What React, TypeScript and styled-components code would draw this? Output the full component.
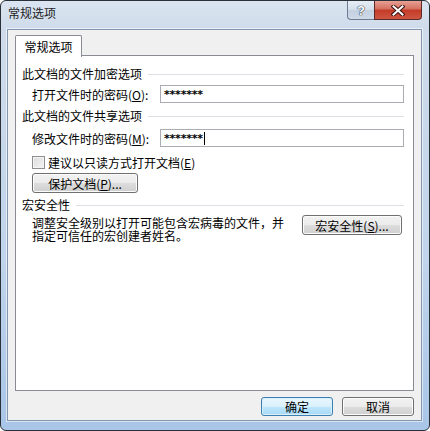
import React from 'react'
import styled, { createGlobalStyle } from 'styled-components'

const GlobalStyle = createGlobalStyle`
  html, body {
    margin: 0;
    padding: 0;
    background: #ffffff;
  }
  body {
    font-family: "Noto Sans CJK SC", "Liberation Sans", sans-serif;
    font-size: 12px;
    color: #000;
  }
`

const Window = styled.div`
  box-sizing: border-box;
  width: 430px;
  height: 431px;
  display: flex;
  flex-direction: column;
  padding: 0 7px 9px 6px;
  border: 1px solid #2a3038;
  border-radius: 6px;
  background: linear-gradient(
    to bottom,
    #dbe5f1 0px,
    #cfdbea 28px,
    #c0d4eb 60%,
    #a9c5e7 100%
  );
  overflow: hidden;
`

const TitleBar = styled.div`
  height: 28px;
  flex: none;
  display: flex;
  align-items: flex-start;
  justify-content: space-between;
`

const Title = styled.div`
  padding: 5px 0 0 1px;
  line-height: 14px;
  font-size: 12px;
  color: #1e1e1e;
`

const CaptionButtons = styled.div`
  display: flex;
  height: 19px;
`

const HelpButton = styled.div`
  box-sizing: border-box;
  width: 27px;
  height: 19px;
  display: flex;
  align-items: center;
  justify-content: center;
  border: 1px solid #6d7d93;
  border-top: none;
  border-right: none;
  border-radius: 0 0 0 4px;
  background: linear-gradient(to bottom, #e6edf5 0%, #d4deea 50%, #c3d0e0 51%, #cfdae8 100%);
  color: #ffffff;
  font-family: "Liberation Sans", sans-serif;
  font-weight: bold;
  font-size: 13px;
  text-shadow: 0 0 1px #2c3a4c, 0 0 1px #2c3a4c, 0 0 1px #2c3a4c;
`

const CloseButton = styled.div`
  box-sizing: border-box;
  width: 48px;
  height: 19px;
  display: flex;
  align-items: center;
  justify-content: center;
  border: 1px solid #5b2a25;
  border-top: none;
  border-radius: 0 0 4px 0;
  background: linear-gradient(to bottom, #e6a194 0%, #d56f5f 45%, #c43b28 50%, #cf5641 100%);
`

const Client = styled.div`
  flex: 1;
  display: flex;
  flex-direction: column;
  padding: 5px 7px 4px 7px;
  background: #f0f0f0;
  border: 1px solid #8496ad;
  box-shadow: 0 0 0 1px rgba(255, 255, 255, 0.55);
`

const TabStrip = styled.div`
  display: flex;
  height: 21px;
  position: relative;
  z-index: 1;
  margin-bottom: -1px;
`

const Tab = styled.div`
  box-sizing: border-box;
  width: 67px;
  height: 22px;
  display: flex;
  align-items: center;
  justify-content: center;
  background: #ffffff;
  border: 1px solid #898c95;
  border-bottom: none;
  border-radius: 2px 2px 0 0;
`

const Panel = styled.div`
  flex: 1;
  display: flex;
  flex-direction: column;
  padding: 10px 9px 0 6px;
  background: #ffffff;
  border: 1px solid #898c95;
`

const SectionTitle = styled.div<{ $gap: number }>`
  display: flex;
  align-items: center;
  line-height: 14px;
  height: 14px;
  margin-top: ${p => p.$gap}px;
  white-space: nowrap;

  &::after {
    content: '';
    flex: 1;
    height: 1px;
    margin-left: 6px;
    background: #dcdfe3;
  }
`

const FieldRow = styled.div<{ $gap: number }>`
  display: flex;
  align-items: center;
  margin-top: ${p => p.$gap}px;
  padding-left: 10px;
`

const FieldLabel = styled.div`
  width: 128px;
  flex: none;
  white-space: nowrap;
`

const PasswordBox = styled.div`
  box-sizing: border-box;
  flex: 1;
  height: 18px;
  display: flex;
  align-items: center;
  padding-left: 3px;
  border: 1px solid #abadb3;
  background: #ffffff;
  font-family: "DejaVu Sans", "Liberation Sans", sans-serif;
  font-weight: bold;
  font-size: 11px;
  letter-spacing: -0.2px;
`

const Caret = styled.span`
  display: inline-block;
  width: 1px;
  height: 13px;
  margin-left: 1px;
  background: #000;
`

const CheckRow = styled.label`
  display: flex;
  align-items: center;
  gap: 3px;
  height: 14px;
  margin-top: 8px;
  padding-left: 10px;
`

const CheckBox = styled.span`
  box-sizing: border-box;
  width: 13px;
  height: 13px;
  border: 1px solid #8e8f8f;
  background: linear-gradient(135deg, #dcdcdc 0%, #f4f4f4 100%);
  box-shadow: inset 0 0 0 1px #f4f4f4;
`

const Button = styled.div<{ $width: number; $focus?: boolean }>`
  box-sizing: border-box;
  width: ${p => p.$width}px;
  height: 20px;
  flex: none;
  display: flex;
  align-items: center;
  justify-content: center;
  border: 1px solid ${p => (p.$focus ? '#3c7fb1' : '#707070')};
  border-radius: 3px;
  background: ${p =>
    p.$focus
      ? 'linear-gradient(to bottom, #eaf6fd 0%, #d9f0fc 50%, #bee6fd 51%, #a7d9f5 100%)'
      : 'linear-gradient(to bottom, #f2f2f2 0%, #ebebeb 50%, #dddddd 51%, #cfcfcf 100%)'};
  box-shadow: inset 0 0 0 1px ${p => (p.$focus ? '#d8eefb' : '#fcfcfc')};
  white-space: nowrap;
`

const ProtectButton = styled(Button)`
  margin: 4px 0 0 10px;
`

const MacroRow = styled.div`
  display: flex;
  align-items: flex-start;
  justify-content: space-between;
  margin-top: 3px;
  padding-left: 10px;
`

const MacroText = styled.div`
  line-height: 13px;
  padding-top: 1px;
`

const MacroButton = styled(Button)`
  margin-right: 2px;
`

const Footer = styled.div`
  display: flex;
  justify-content: flex-end;
  gap: 9px;
  margin-top: 6px;

  ${Button} {
    height: 19px;
  }
`

const Key = styled.span`
  text-decoration: underline;
  text-underline-offset: 1px;
`

const CloseGlyph = () => (
  <svg width="14" height="11" viewBox="0 0 14 11">
    <path d="M2.5 1.5 L11.5 9.5 M11.5 1.5 L2.5 9.5" stroke="#3b1511" strokeWidth="4" strokeLinecap="square" />
    <path d="M2.5 1.5 L11.5 9.5 M11.5 1.5 L2.5 9.5" stroke="#ffffff" strokeWidth="2" strokeLinecap="square" />
  </svg>
)

export default function App() {
  return (
    <>
      <GlobalStyle />
      <Window>
        <TitleBar>
          <Title>常规选项</Title>
          <CaptionButtons>
            <HelpButton>?</HelpButton>
            <CloseButton>
              <CloseGlyph />
            </CloseButton>
          </CaptionButtons>
        </TitleBar>
        <Client>
          <TabStrip>
            <Tab>常规选项</Tab>
          </TabStrip>
          <Panel>
            <SectionTitle $gap={1}>此文档的文件加密选项</SectionTitle>
            <FieldRow $gap={4}>
              <FieldLabel>
                打开文件时的密码(<Key>O</Key>):
              </FieldLabel>
              <PasswordBox>*******</PasswordBox>
            </FieldRow>
            <SectionTitle $gap={6}>此文档的文件共享选项</SectionTitle>
            <FieldRow $gap={6}>
              <FieldLabel>
                修改文件时的密码(<Key>M</Key>):
              </FieldLabel>
              <PasswordBox>
                *******
                <Caret />
              </PasswordBox>
            </FieldRow>
            <CheckRow>
              <CheckBox />
              <span>
                建议以只读方式打开文档(<Key>E</Key>)
              </span>
            </CheckRow>
            <ProtectButton $width={106}>
              <span>
                保护文档(<Key>P</Key>)...
              </span>
            </ProtectButton>
            <SectionTitle $gap={5}>宏安全性</SectionTitle>
            <MacroRow>
              <MacroText>
                调整安全级别以打开可能包含宏病毒的文件，并
                <br />
                指定可信任的宏创建者姓名。
              </MacroText>
              <MacroButton $width={100}>
                <span>
                  宏安全性(<Key>S</Key>)...
                </span>
              </MacroButton>
            </MacroRow>
          </Panel>
          <Footer>
            <Button $width={72} $focus>
              确定
            </Button>
            <Button $width={72}>取消</Button>
          </Footer>
        </Client>
      </Window>
    </>
  )
}
